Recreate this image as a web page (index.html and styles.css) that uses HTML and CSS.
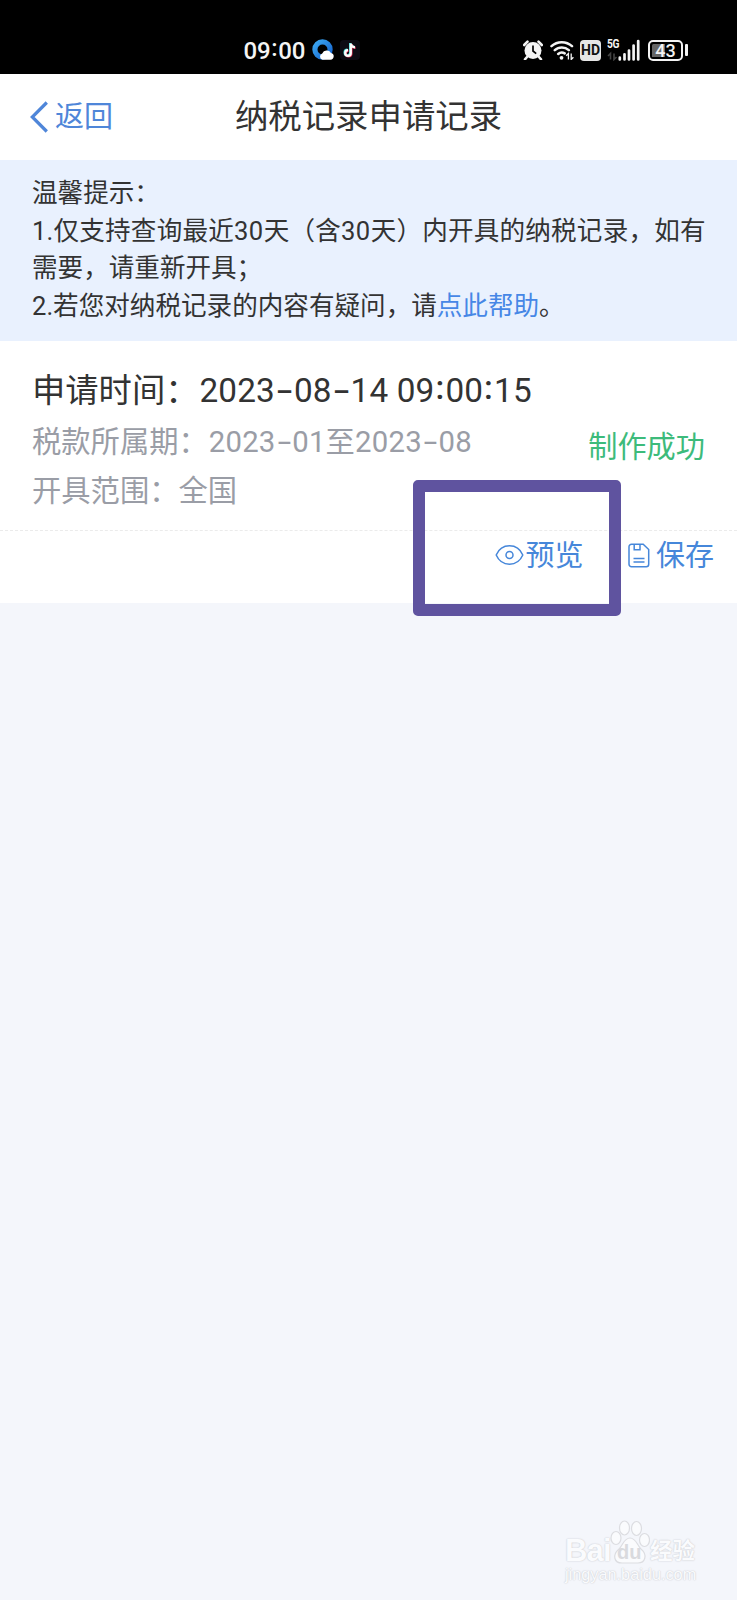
FILE: index.html
```html
<!DOCTYPE html>
<html lang="zh-CN">
<head>
<meta charset="utf-8">
<title>纳税记录申请记录</title>
<link rel="stylesheet" href="styles.css">
</head>
<body>
<div class="statusbar">
  <div class="status-left">
    <span class="clock">09<span class="cl">:</span>00</span>
    <svg class="i-browser" width="22" height="22" viewBox="0 0 22 22">
      <defs><linearGradient id="ring" x1="0" y1="0" x2="1" y2="1"><stop offset="0" stop-color="#3ba6f0"/><stop offset="1" stop-color="#1464cf"/></linearGradient></defs>
      <circle cx="10.500" cy="10.500" r="7.600" fill="none" stroke="url(#ring)" stroke-width="5.200"/>
      <path d="M10.500 20.800a3.300 3.300 0 0 1-.3-6.300 5 5 0 0 1 8.800-.6 3.500 3.500 0 0 1-.6 6.900z" fill="#fff"/>
    </svg>
    <svg class="i-tiktok" width="20" height="20" viewBox="0 0 20 20">
      <rect width="20" height="20" rx="4" fill="#0d0b14"/>
      <g fill="none" stroke-width="2.300">
        <path d="M10.200 3v9.500a2.800 2.800 0 1 1-2.800-2.800M10.200 3.400c.4 2.200 2 3.400 4.200 3.500" stroke="#3fe0e0"/>
        <path d="M11.400 4v9.500a2.800 2.800 0 1 1-2.800-2.800M11.400 4.400c.4 2.200 2 3.400 4.200 3.500" stroke="#e8325c"/>
        <path d="M10.800 3.500V13A2.800 2.800 0 1 1 8 10.200M10.800 3.900c.4 2.200 2 3.400 4.200 3.500" stroke="#fff"/>
      </g>
    </svg>
  </div>
  <div class="status-right">
    <svg width="20" height="20" viewBox="0 0 20 20">
      <circle cx="10" cy="10.500" r="8.500" fill="#f4f4f4"/>
      <path d="M1.200 5L4.500 1.700M18.800 5L15.500 1.700M4 17l-2 2.300M16 17l2 2.300" stroke="#f4f4f4" stroke-width="2.600" stroke-linecap="round"/>
      <path d="M10 5.500v5.500l3.200 2.600" fill="none" stroke="#000" stroke-width="1.700"/>
    </svg>
    <svg class="i-wifi" width="24" height="20" viewBox="0 0 24 20">
      <g fill="none" stroke="#f4f4f4" stroke-width="2.500" stroke-linecap="round">
        <path d="M1.500 6.200a15 15 0 0 1 20.500 0M4.800 10.200a10.200 10.200 0 0 1 14 0M8.200 14a5.300 5.300 0 0 1 6.500-.6"/>
      </g>
      <circle cx="11.500" cy="17.800" r="1.900" fill="#f4f4f4"/>
      <path d="M18.400 19.500v-6l-2.200 2.300M21.200 13.500v6l2.200-2.300" fill="none" stroke="#f4f4f4" stroke-width="1.300"/>
    </svg>
    <span class="hd">HD</span>
    <span class="signal">
      <span class="net">5G</span>
      <svg width="33" height="22" viewBox="0 0 33 22">
        <path d="M3.500 20.500v-6L1 17M7 14.500v6L9.500 18" fill="none" stroke="#444" stroke-width="1.600"/>
        <path d="M12.800 20.500v-1.800M17.500 20.500v-5.200M22 20.500v-9M26.600 20.500v-14M31.200 20.500V2" stroke="#f4f4f4" stroke-width="2.700" stroke-linecap="round"/>
      </svg>
    </span>
    <span class="battery"><span class="cell">43</span><span class="nub"></span></span>
  </div>
</div>

<div class="header">
  <a class="back"><svg width="19" height="34" viewBox="0 0 19 34"><path d="M16.800 2.500L2.300 17 16.800 31.500" fill="none" stroke="#4f86d9" stroke-width="3.200"/></svg><span>返回</span></a>
  <h1 class="title">纳税记录申请记录</h1>
</div>

<div class="notice">
  <p>温馨提示：</p>
  <p class="full">1.仅支持查询最近<span class="n">30</span>天（含<span class="n">30</span>天）内开具的纳税记录，如有</p>
  <p>需要，请重新开具；</p>
  <p>2.若您对纳税记录的内容有疑问，请<a class="help">点此帮助</a>。</p>
</div>

<div class="card">
  <div class="info">
    <div class="fields">
      <div class="time">申请时间：<span class="stamp">2023<span class="hy">-</span>08<span class="hy">-</span>14 09<span class="cl">:</span>00<span class="cl">:</span>15</span></div>
      <div class="field">税款所属期：<span class="period">2023<span class="hy">-</span>01至2023<span class="hy">-</span>08</span></div>
      <div class="field">开具范围：全国</div>
    </div>
    <div class="state">制作成功</div>
  </div>
  <div class="actions">
    <a class="action preview">
      <svg width="29" height="22" viewBox="0 0 29 22"><g fill="none" stroke="#4687da" stroke-width="1.500"><path d="M1.200 11C6.500-1.200 22.500-1.200 27.800 11 22.500 23.200 6.500 23.200 1.200 11z"/><circle cx="14.500" cy="11" r="3.500"/></g></svg><span class="label">预览</span>
      <span class="highlight"></span>
    </a>
    <a class="action save">
      <svg width="22" height="25" viewBox="0 0 22 25"><g fill="none" stroke="#4687da" stroke-width="1.500"><path d="M3.500 1.200h11.700l5.500 5.300v14.700a2.500 2.500 0 0 1-2.500 2.500H3.500A2.500 2.500 0 0 1 1 21.200V3.700a2.500 2.500 0 0 1 2.500-2.500z"/><path d="M6.200 1.200v5.500h5.800V1.200M5.500 15.500h11M5.500 19h11"/></g></svg><span class="label">保存</span>
    </a>
  </div>
</div>

<div class="watermark">
  <div class="brand">
    <span class="bai">Bai</span>
    <span class="paw"><svg width="40" height="46" viewBox="0 0 40 46"><g fill="#fafbfd" stroke="#dcdde1" stroke-width="1.200"><ellipse cx="6" cy="19" rx="5" ry="6.500"/><ellipse cx="14.500" cy="9" rx="5" ry="7"/><ellipse cx="26.500" cy="9.500" rx="5" ry="7"/><ellipse cx="34.500" cy="21" rx="5" ry="6.500"/><path d="M20 19c6 0 7 7 11 11 7 6 4 14-3 14H12c-8 0-10-8-3-14C13 26 14 19 20 19z"/></g></svg><span class="du">du</span></span>
    <span class="jy">经验</span>
  </div>
  <div class="url">jingyan.baidu.com</div>
</div>
</body>
</html>
```
FILE: styles.css
```css
* { box-sizing: border-box; }
body {
  margin: 0;
  min-height: 1600px;
  position: relative;
  background: #f4f6fb;
  color: #333;
  font-family: Roboto, "Noto Sans CJK SC", sans-serif;
  white-space: nowrap;
}
p, h1 { margin: 0; font-weight: 400; }
svg { display: block; flex: none; }

.statusbar {
  height: 73.500px;
  background: #000;
  display: flex;
  justify-content: space-between;
  padding: 27px 49px 0 243.500px;
  color: #f4f4f4;
}
.status-left, .status-right { display: flex; align-items: center; height: 46px; }
.clock { width: 62px; font-size: 24px; font-weight: 500; letter-spacing: -0.100px; line-height: 46px; padding-top: 1px; }
.cl { position: relative; top: -0.090em; padding: 0 0.030em; font-weight: 500; }
.i-browser { margin-left: 6px; }
.i-tiktok { margin-left: 6px; }
.i-wifi { margin-left: 7px; }
.hd {
  width: 21px; height: 21px; margin-left: 6px;
  border-radius: 4px; background: #e6e6e6; color: #111;
  font-size: 14px; font-weight: 700; line-height: 21px; text-align: center;
}
.signal { position: relative; margin-left: 6px; }
.net { position: absolute; left: 0; top: -1px; font-size: 12px; font-weight: 700; line-height: 12px; letter-spacing: -0.500px; transform: scaleX(0.85); transform-origin: 0 0; }
.battery { display: flex; align-items: center; margin-left: 8px; }
.cell {
  width: 35px; height: 21px; border: 2px solid #f4f4f4; border-radius: 5px;
  background: linear-gradient(90deg, #666 0 13px, #000 13px) content-box; padding: 1.500px;
  font-size: 18px; font-weight: 500; line-height: 15px; text-align: center;
}
.nub { width: 3px; height: 12px; margin-left: 2px; background: #f4f4f4; border-radius: 1px; }

.header {
  height: 86.500px; background: #fff;
  display: grid; grid-template-columns: 1fr auto 1fr; align-items: center;
}
.back { display: flex; align-items: center; gap: 6px; padding-left: 30px; color: #4f86d9; font-size: 29px; line-height: 40px; }
.title { font-size: 33.400px; line-height: 48px; }

.notice {
  height: 181px; padding: 15px 31px 0 32px;
  background: #e9f1fe; color: #333;
  font-size: 25.580px; line-height: 37.500px;
}
.full { letter-spacing: 0.200px; }
.n { letter-spacing: 0.450px; }
.help { color: #4687e6; }

.card { height: 262px; background: #fff; }
.info { height: 189.500px; display: flex; justify-content: space-between; align-items: center; padding: 0 32px 0 32px; border-bottom: 1px dashed #ebebeb; }
.fields { height: 189px; padding-top: 25px; }
.time { font-size: 33.300px; line-height: 50px; }
.stamp { letter-spacing: 0.150px; margin-left: 1px; }
.period { letter-spacing: 0.220px; margin-left: 1px; }
.hy { display: inline-block; width: 0.570em; font-family: Inter, sans-serif; text-align: center; line-height: 1; letter-spacing: 0; transform: scaleX(1.250); }
.field { font-size: 29.300px; line-height: 49px; color: #9a9da6; position: relative; top: 2px; }
.state { font-size: 29.200px; line-height: 44px; padding-top: 24px; color: #3dbb7b; }
.actions { height: 72.500px; display: flex; justify-content: flex-end; padding: 0 23px 23px 0; }
.action { position: relative; display: flex; align-items: center; font-size: 29px; line-height: 44px; color: #4687da; }
.label { padding-top: 2px; }
.preview { gap: 1px; margin-right: 45px; }
.save { gap: 5.500px; }
.highlight {
  position: absolute; left: -82px; top: -51px; width: 208px; height: 136px;
  border-radius: 5px; background: none; border: 12px solid #5f539f;
}

.watermark { position: absolute; left: 565px; top: 1519px; width: 134px; color: #fafbfd; }
.brand { display: flex; align-items: flex-end; height: 46px; }
.bai, .jy, .url { text-shadow: 0 0 1px #c9cacf, 0 0 2px #d6d7dc; }
.bai { width: 45px; font: 700 31px/28px "Liberation Sans", sans-serif; letter-spacing: -0.800px; }
.paw { position: relative; }
.du { position: absolute; left: 7px; top: 22px; font: 700 20px/22px "Liberation Sans", sans-serif; color: #d9dade; }
.jy { font-size: 22.500px; font-weight: 700; line-height: 27px; }
.url { font: 16.300px/20px "Liberation Sans", sans-serif; margin-top: -1px; }
```
